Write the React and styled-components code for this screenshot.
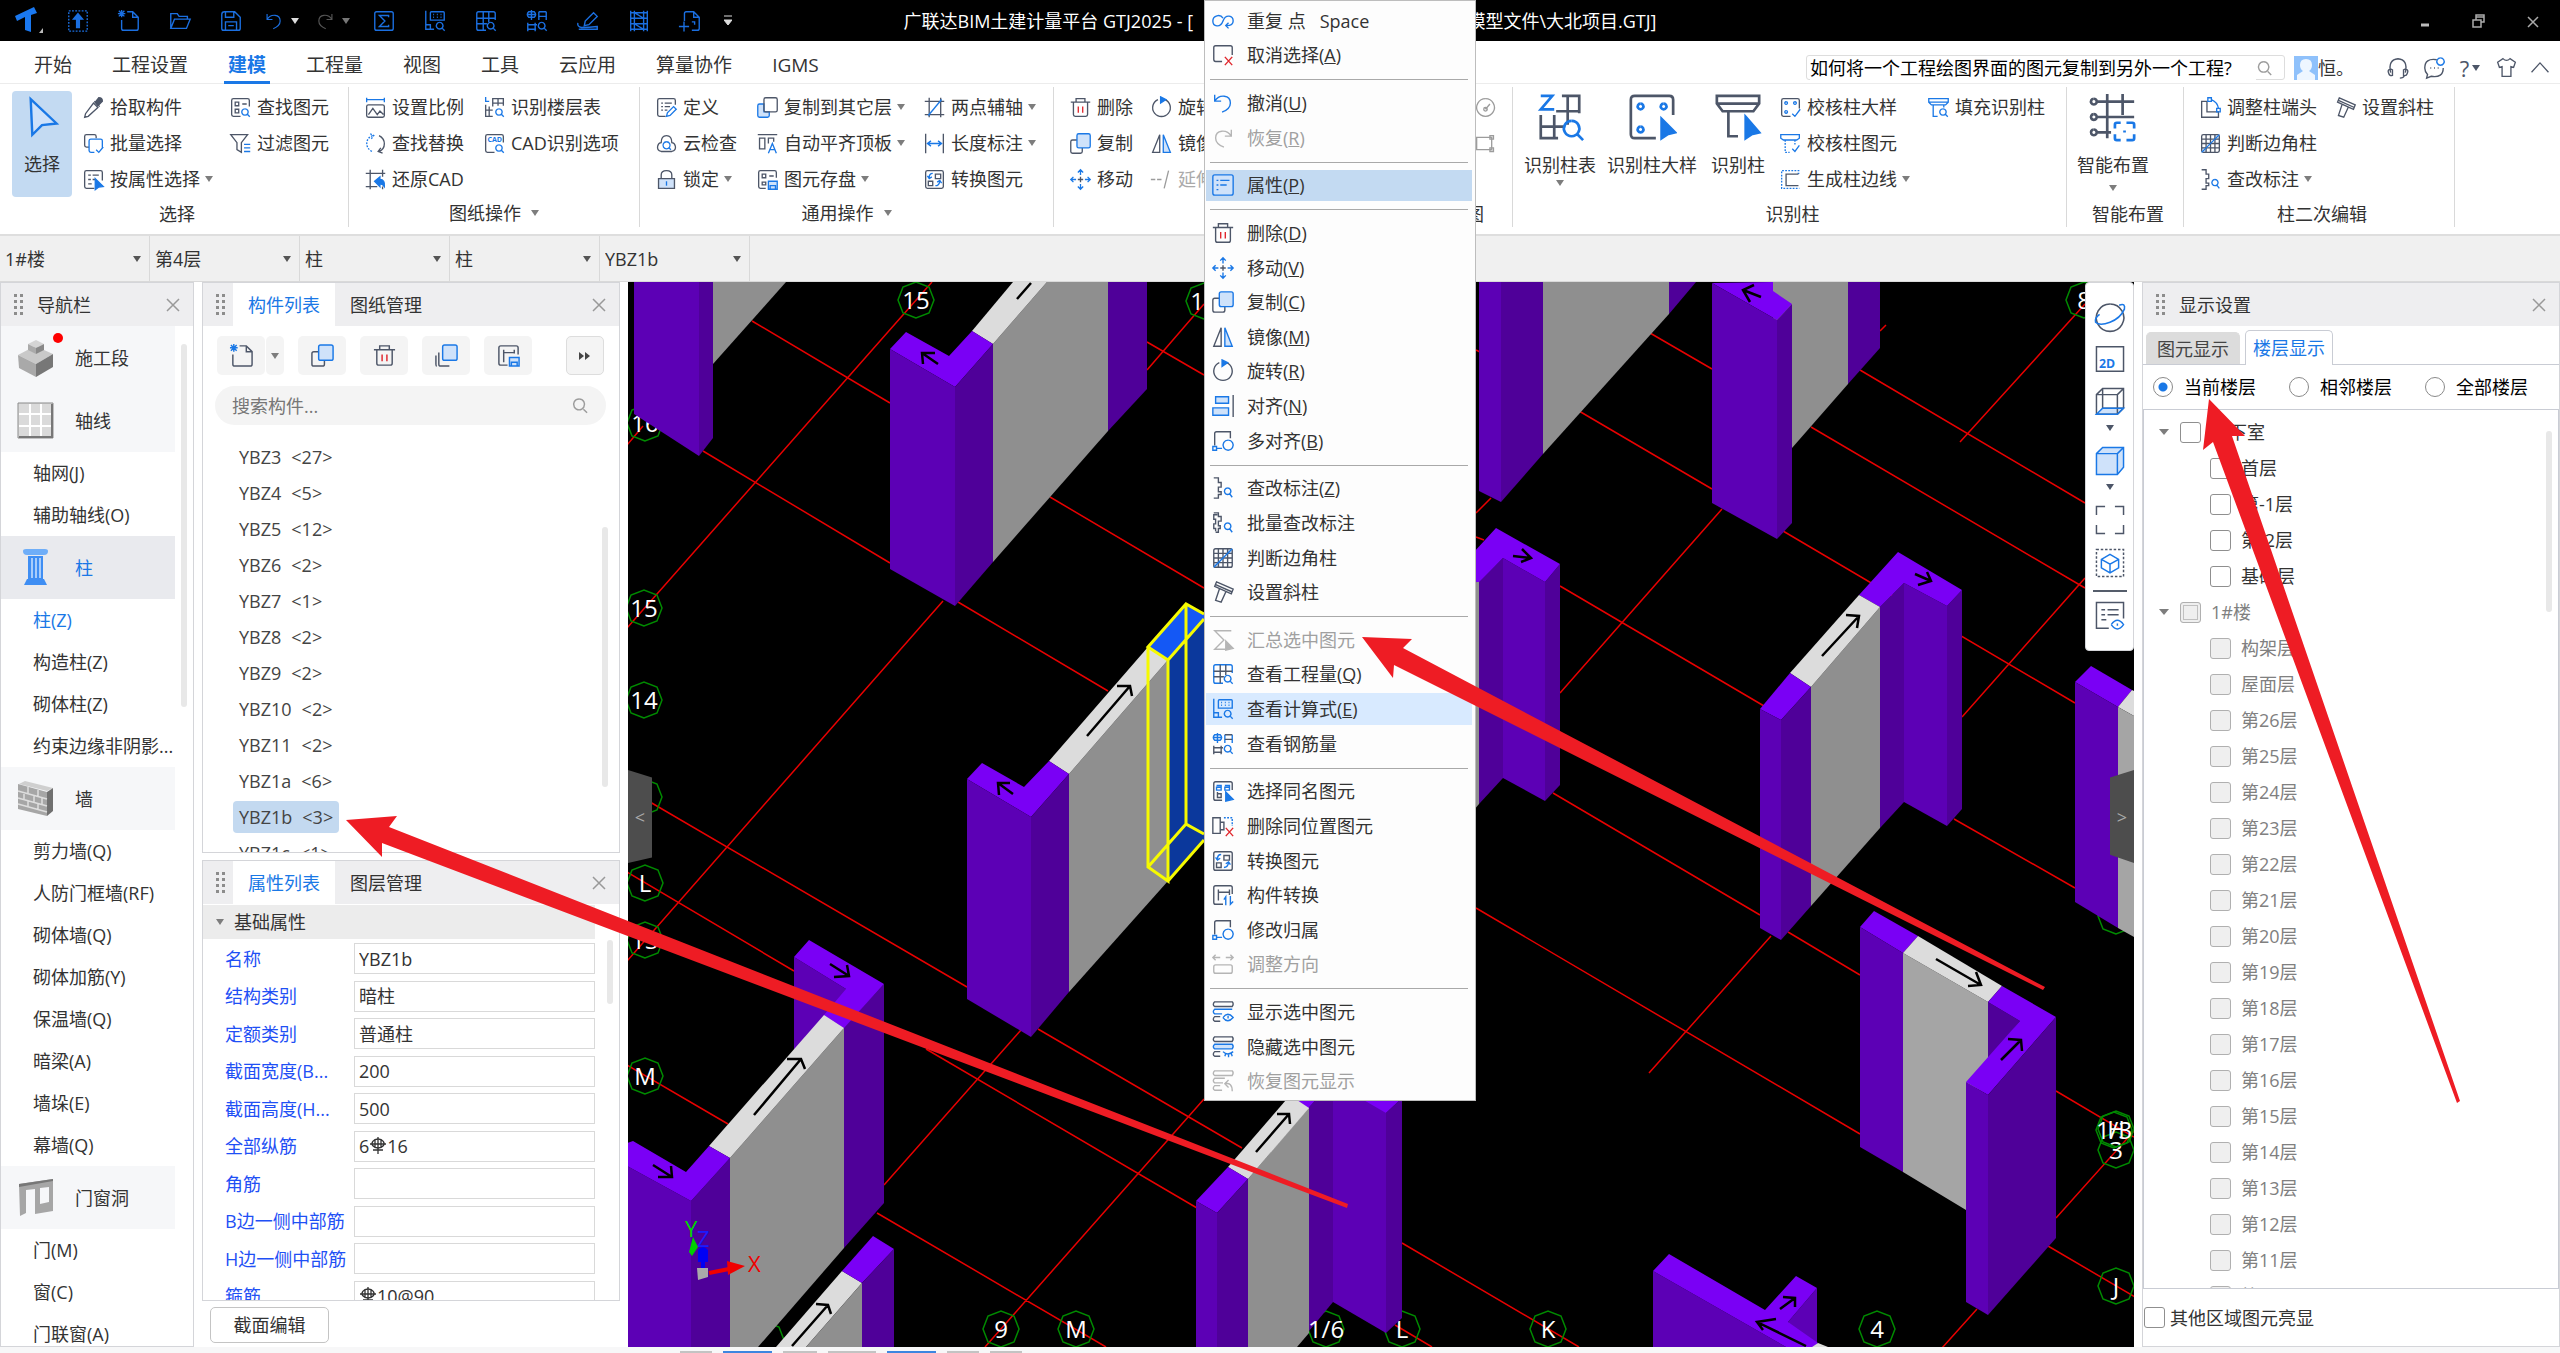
import React from "react";
import styled, { createGlobalStyle, css } from "styled-components";

const BLUE = "#1a78e6";
const DARK = "#4d5668";
const RED = "#e0262c";

/* ---------- icons ---------- */
// each entry is [kind, path]; kinds: d dark, b blue, r red strokes,
// B / D filled, l light blue fill with a blue stroke, L light blue fill only
const LENS = ["b", "M17 13.5a3.6 3.6 0 1 0 .1 0M20 20l2.5 2.5"];

const icons = {
  upload: [["b-", "M2 1h20v22H2z"], ["B", "M12 4l5 6h-3.500v9h-3v-9H7z"]],
  newFile: [["b", "M10 2h6l6 6v12a2 2 0 0 1-2 2H6a2 2 0 0 1-2-2V11M16 2v6h6"], ["b", "M1 1l6 6M7 1L1 7M4 0v8M0 4h8"]],
  open: [["b", "M2 20V4h7l2 3h9v3M2 20l4-10h17l-4 10z"]],
  save: [["b", "M2 5q0-3 3-3h11l6 6v12q0 2-2 2H4q-2 0-2-2zM6 2v6h9V2M6 22v-9h12v9M9 17h6"]],
  undo: [["b", "M3 3v7h7M3 10C8 2 20 3 20 12c0 5-4 8-9 10"]],
  redo: [["g", "M21 3v7h-7M21 10C16 2 4 3 4 12c0 5 4 8 9 10"]],
  sigma: [["b", "M2 4q0-2 2-2h16q2 0 2 2v16q0 2-2 2H4q-2 0-2-2zM17 8V6H7l6 6-6 6h10v-2"]],
  calc: [["b", "M2 1v20h9M7 3q0-1 1-1h13q1 0 1 1v8H7zM2 16h5v5M10 5h1M14 5h1M18 5h1M10 8h1M14 8h1M18 8h1"], LENS],
  gridFind: [["b", "M22 11V4q0-2-2-2H4q-2 0-2 2v16q0 2 2 2h8"], ["k", "M2 9h20M2 15h11M9 2v20M15 2v11"], LENS],
  rebarFind: [["b", "M1 5h10M3 2q-3 3 0 6h6q3-3 0-6zM6 0v11M14 11V2M22 11V2"], ["k", "M14 2h8M14 7h8M2 23v-9M10 14v9M2 16h10M2 21h9"], LENS],
  pen: [["b", "M8 17l1-5 9-9 4 4-9 9zM1 14q-1 4 4 5 8 0 17-1v3H2"]],
  film: [["b", "M3 1v22M21 1v22M7 1v22M17 1v22M3 3h18M3 9h18M3 15h18M3 21h18M7 3l10 6M7 15l10 6"]],
  addSheet: [["b", "M6 12V4q0-2 2-2h8l6 6v12q0 2-2 2h-6M16 2v6h6M0 18h11M5.500 12.500v11M14 13h3v3"]],

  cursor: [["l", "M5 1l16 15-9 1-6 6z"]],
  dropper: [["d", "M12 7l5 5L6 22l-4 1 1-4zM13 5l6 6"], ["D", "M14 6l4-5q4 0 4 4l-5 5z"]],
  batch: [["d", "M7 16H4q-2 0-2-2V4q0-2 2-2h9q2 0 2 2v2"], ["b", "M13 22H9q-2 0-2-2V9q0-2 2-2h11q2 0 2 2v8M15 19l3 3 5-6"]],
  byProp: [["d", "M13 22H4q-2 0-2-2V4q0-2 2-2h16q2 0 2 2v9M6 7h3M11 7h7M6 12h3M11 12h3M6 17h4"], ["B", "M14 11l9 9-5 .5-4 3z"]],
  findEl: [["d", "M12 22H4q-2 0-2-2V4q0-2 2-2h16q2 0 2 2v7M6 6h4v4H6zM14 8h5M6 14h4v4H6z"], LENS],
  filter: [["d", "M1 2h19l-7 9v11l-5-3v-8z"], ["b", "M16 13h7M16 17h7M16 21h7"]],
  scale: [["b", "M2 1v5M22 1v5M2 3h20"], ["d", "M2 11q0-2 2-2h16q2 0 2 2v10q0 2-2 2H4q-2 0-2-2zM4 20l5-7 5 7 3-4 4 4"]],
  swap: [["b-", "M8 21C0 17 0 6 9 3M6 1l4 2-3 4"], ["d", "M16 3c8 4 8 15 0 18M20 23l-5-2 3-4"]],
  restore: [["d", "M1 5h22M1 20h13M6 1v22M20 1v8M20 20v3"], ["B", "M11 14l6-5v3q6 0 5 8-2-3-5-3v3z"]],
  floorTable: [["b", "M2 0v5h4"], ["d", "M10 11V2h12v8M10 7h12M16 2v8M2 9v13h8M2 15h8M6 11v11"], LENS],
  cadOpt: [["d", "M12 22H4q-2 0-2-2V4q0-2 2-2h16q2 0 2 2v7"], ["t", "CAD"], LENS],
  define: [["d", "M11 22H4q-2 0-2-2V4q0-2 2-2h16q2 0 2 2v5M6 7h2M10 7h8M6 11h2M10 11h6M6 15h2M10 15h3"], ["b", "M12 22l1-4 7-7 3 3-7 7z"]],
  cloud: [["d", "M6 21q-5-1-4-6 1-4 4-4 0-8 6-8t6 8q3 0 4 4 1 5-4 6z"], ["b", "M12 10a4 4 0 1 0 .1 0M15 17l2 2"]],
  lock: [["L", "M3 11h18v11H3z"], ["d", "M6 11V7q0-5 6-5t6 5v4M3 11h18v11H3z"], ["b", "M12 14v5"]],
  copy: [["d", "M8 8H3q-2 0-2 2v11q0 2 2 2h9q2 0 2-2v-4"], ["l", "M8 3q0-2 2-2h11q2 0 2 2v12q0 2-2 2H10q-2 0-2-2z"]],
  copyFloor: [["l", "M8 8H3q-2 0-2 2v11q0 2 2 2h9q2 0 2-2v-4h-6z"], ["d", "M8 3q0-2 2-2h11q2 0 2 2v12q0 2-2 2H10q-2 0-2-2z"]],
  alignTop: [["d", "M1 2h22M3 6h6v12H3zM13 12V6h6v4"], ["b", "M13 23l4.500-11L22 23M14 19h7"]],
  store: [["d", "M10 22H4q-2 0-2-2V4q0-2 2-2h16q2 0 2 2v6M6 6h4v4H6zM14 8h5M6 15h4v3H6z"], ["l", "M13 14h10v9H13zM15 23v-4h6v4"]],
  twoPoint: [["d", "M1 5h22M1 20h22M6 1v22M19 1v22"], ["b", "M5 21L20 3"]],
  length: [["d", "M2 1v22M22 1v22"], ["b", "M4 12h16M8 9l-4 3 4 3M16 9l4 3-4 3"]],
  convert: [["d", "M2 4q0-2 2-2h16q2 0 2 2v16q0 2-2 2H4q-2 0-2-2zM13 6h6v5h-6zM5 14h5v5H5z"], ["b", "M10 5q-4 0-4 5M4 8l2 3 3-2M13 19q4 0 5-5M15 15l3-2 2 3"]],
  trash: [["d", "M1 6h22M4 6v14q0 2 2 2h12q2 0 2-2V6M7 6V2h10v4"], ["r", "M9.500 11v7M14.500 11v7"]],
  move: [["b", "M9 4l3-3 3 3M9 20l3 3 3-3M4 9l-3 3 3 3M20 9l3 3-3 3M12 2v5M12 17v5M2 12h5M17 12h5"], ["d", "M12 9v6M9 12h6"]],
  rotate: [["d", "M16 3a10 10 0 1 1-8 0"], ["B", "M11 0l6 3-6 4z"]],
  mirror: [["d", "M10 2v20H2z"], ["l", "M14 2v20h8z"]],
  extend: [["g", "M0 12h5M7 12h5M15 22l5-20"]],
  circle: [["g", "M12 2a10 10 0 1 0 .1 0M12 14l5-6M10 14a2 2 0 1 0 4 0 2 2 0 1 0-4 0"]],
  rect: [["g", "M2 5h17v14H2zM17 3h4v4h-4zM17 17h4v4h-4z"]],

  checkDetail: [["d", "M12 22H4q-2 0-2-2V4q0-2 2-2h16q2 0 2 2v9"], ["b", "M7 5.500a1.500 1.500 0 1 0 .1 0M17 5.500a1.500 1.500 0 1 0 .1 0M7 15.500a1.500 1.500 0 1 0 .1 0M14 19l3 3 6-8"]],
  checkEl: [["b-", "M6 8v14h5M17 8v5"], ["b", "M1 2h21v4l-3 2H4L1 6zM14 18l3 3 5-7"]],
  edge: [["b-", "M22 2H2v20h20M22 5h-3"], ["d", "M21 6H7v13h14"]],
  fillCol: [["b", "M1 2h22v4l-3 3H4L1 6zM1 6h22M6 9v13h5M18 9v3"], LENS],
  colEnd: [["d", "M2 5h6v12h13v6H2z"], ["b", "M9 1h4v4H9zM13 3q7 3 8 10M19 13h4v4h-4z"]],
  gridCheck: [["L", "M16 2h6v6h-6zM2 16h6v6H2z"], ["d", "M2 4q0-2 2-2h16q2 0 2 2v16q0 2-2 2H4q-2 0-2-2zM2 7h20M2 12h20M2 17h20M7 2v20M12 2v20M17 2v20"], ["b", "M22 2L2 22"]],
  annotate: [["d", "M2 1h5v5h3v5H7v5h3v3H7v4H2M7 16"], ["b", "M17 12a3.500 3.500 0 1 0 .1 0M19 18l3 4"]],
  annotateAll: [["d", "M2 1h5v4h3v5H7v5h2v3H7v4H4M6 3H2v5h2v5H2v5h2v3"], ["b", "M17 12a3.500 3.500 0 1 0 .1 0M19 18l3 4"]],
  slant: [["d", "M5 1l18 8-2 5L3 6zM4 4l18 8M8 9L4 21l6 2 5-11"]],

  repeat: [["b", "M12 9C9 4 1 6 1 12s8 8 11 0 11-6 11 0c0 4-3 5-7 5M18 14l-3 3 3 3"]],
  cancel: [["d", "M11 19H4q-2 0-2-2V4q0-2 2-2h16q2 0 2 2v8"], ["r", "M14 14l8 9M22 14l-8 9"]],
  props: [["l", "M1 3q0-2 2-2h18q2 0 2 2v18q0 2-2 2H3q-2 0-2-2z"], ["b", "M5 7h2M9 7h10M5 12h2M9 12h7M5 17h2"]],
  align: [["l", "M4 2h14v7H4zM1 14h17v8H1z"], ["d", "M23 0v24"]],
  multiAlign: [["d", "M3 17V4q0-2 2-2h15v7"], ["b", "M1 18h4v4H1zM5 20h6M17.500 11a5.500 5.500 0 1 0 .1 0"]],
  sumSel: [["g", "M21 2H3l10 10L3 22h12"], ["G", "M15 13l8 8-8 2z"]],
  sameName: [["d", "M11 22H4q-2 0-2-2V4q0-2 2-2h16q2 0 2 2v7M6 13v6h4v-4H6"], ["b", "M5 6h5v5H5V8h5M14 6h5v5h-5V8h5"], ["B", "M15 13l8 8-8 2z"]],
  delSame: [["d", "M1 3h8v17H1zM9 8h4v8H9"], ["b-", "M13 3h9v9"], ["r", "M15 14l8 9M23 14l-8 9"]],
  partSwap: [["d", "M12 22H4q-2 0-2-2V4q0-2 2-2h16q2 0 2 2v7M7 6v12M7 9h12M19 6v6M7 18"], ["b", "M15 23v-9l-2 3M20 13v9l3-3"]],
  direction: [["g", "M1 5h8M4 2L1 5l3 3M15 5h8M20 2l3 3-3 3M4 13h16q2 0 2 2v5q0 2-2 2H4q-2 0-2-2v-5q0-2 2-2z"]],
  showSel: [["d", "M22 1H3q-3 3 0 5h19q2-3 0-5zM9 17H3q-3 3 0 5h6"], ["b", "M22 9H3q-3 3 0 5h8M12 18q5-7 11 0-6 7-11 0M17.500 16v3"]],
  hideSel: [["d", "M22 1H3q-3 3 0 5h19q2-3 0-5zM9 17H3q-3 3 0 5h6"], ["l", "M22 9H3q-3 3 0 5h19q2-3 0-5z"], ["b", "M12 17q5 5 11 0M14 22l1-3M18 23v-3M22 22l-1-3"]],
  restoreSel: [["g", "M22 1H3q-3 3 0 5h19q2-3 0-5zM14 9H3q-3 3 0 5h9M9 17H3q-3 3 0 5h8M14 15q8-2 8 8M18 11l-4 4 4 4"]],

  tableBig: [["b", "M2 1h6L2 8h7"], ["d", "M13 1h9v9M10 9h12M16 1v15M2 11v12h9M2 17h12M9 11v12"], ["b", "M18 14a4 4 0 1 0 .1 0M21 21l3 3"]],
  detailBig: [["d", "M14 23H3q-2 0-2-2V3q0-2 2-2h18q2 0 2 2v8"], ["b", "M6 5a1.500 1.500 0 1 0 .1 0M18 5a1.500 1.500 0 1 0 .1 0M6 17a1.500 1.500 0 1 0 .1 0"], ["B", "M17 13l7 7-4 1-3 2z"]],
  columnBig: [["d", "M1 1h22v4l-3 4H4L1 5zM1 5h22M7 9v13h5"], ["B", "M16 12l7 8-4 1-3 2z"]],
  layoutBig: [["d", "M4 4h19M4 12h19M4 20h7M9 0v23M17 0v11M2 2.500a1.500 1.500 0 1 0 .1 0M2 10.500a1.500 1.500 0 1 0 .1 0M2 18.500a1.500 1.500 0 1 0 .1 0"], ["b", "M13 18v-2q0-1 1-1h2M19 15h3q1 0 1 1v2M13 21v2q0 1 1 1h2M19 24h3q1 0 1-1v-2M18 19v1"]],

  stack: [["d", "M4 9v12q0 2 2 2h9M1 12v9q0 2 1 2"], ["l", "M8 3q0-2 2-2h11q2 0 2 2v12q0 2-2 2H10q-2 0-2-2z"]],
  savePart: [["d", "M11 22H4q-2 0-2-2V4q0-2 2-2h16q2 0 2 2v7M7 6v13M7 9h11M18 6v4"], ["l", "M13 14h10v9H13zM15 23v-4h6v4"]],
  newPart: [["d", "M10 2h7l6 6v13q0 2-2 2H5q-2 0-2-2V11M17 2v6h6"], ["b", "M1 1l6 6M7 1L1 7M4 0v8M0 4h8"]],
  search: [["g", "M10 3a7.500 7.500 0 1 0 .1 0M16 17l5 5"]],

  orbit: [["d", "M12 2a10.500 10.500 0 1 0 .1 0"], ["b", "M19 3q5-2 4 3-3 7-11 10T1 16q-1-3 3-6"]],
  view2d: [["d", "M1 2h22v20H1z"], ["t2", "2D"]],
  wire: [["L", "M1 22l5-5h17l-4 5z"], ["d", "M1 6h17v16H1zM1 6l5-5h17v16l-5 5M18 6l5-5M6 1v16h17"], ["b", "M1 22l5-5h17l-5 5z"]],
  solid: [["l", "M1 6l5-5h17v16l-5 6H1zM1 6h17v17M18 6l5-5"]],
  fit: [["d", "M1 8V1h7M16 1h7v7M23 16v7h-7M8 23H1v-7"]],
  isolate: [["d-", "M1 1h22v22H1z"], ["b", "M12 5l7 4v7l-7 4-7-4V9zM5 9l7 4 7-4M12 13v7"]],
  listEye: [["d", "M11 22H1V1h22v13M5 7h3M10 7h9M5 11h3M10 11h9M5 15h4"], ["b", "M13 19q5-7 10 0-5 7-10 0M18 18v2"]],

  headset: [["d", "M4 17q-3-14 8-15 11 1 8 15M4 13q-4 1-2 5 1 3 4 2V14zM20 13q4 1 2 5-1 3-4 2V14zM19 20q-1 3-5 3"]],
  bubble: [["d", "M15 3Q2 1 2 12q0 4 3 7l-1 4 5-2q13 2 13-9M8 12h1M12 12h1M16 12h1"], ["b", "M19 1a4 4 0 1 0 .1 0"]],
  shirt: [["d", "M8 2q4 4 8 0l6 4-2 6-3-1v11H7V11l-3 1-2-6z"]],
  chevron: [["d", "M2 17L12 6l10 11"]],
};

const palette = { d: DARK, D: DARK, k: DARK, b: BLUE, B: BLUE, l: BLUE, L: "none", r: RED, g: "#9c9c9c", G: "#9c9c9c" };

function Icon({ name, size = 22, tone, weight = 1.500 }) {
  return (
    <svg width={size} height={size} viewBox="-1 -1 26 26" fill="none" aria-hidden="true">
      {icons[name].map(([kind, d], i) => {
        const k = kind[0];
        if (k === "t") {
          const wide = kind === "t2";
          return (
            <text key={i} x={wide ? 3 : 4} y={wide ? 19 : 10} fontSize={wide ? 10 : 8} fontWeight="700" fill={BLUE}>
              {d}
            </text>
          );
        }
        const color = tone || palette[k];
        let fill = "none";
        if (k === "B" || k === "D" || k === "G") fill = color;
        if (k === "l" || k === "L") fill = "#cfe2fa";
        return (
          <path
            key={i}
            d={d}
            stroke={k === "L" ? "none" : color}
            strokeWidth={weight}
            strokeDasharray={kind[1] === "-" ? "2 1.500" : undefined}
            fill={fill}
          />
        );
      })}
    </svg>
  );
}

/* ---------- base ---------- */
const GlobalStyle = createGlobalStyle`
  * {
    box-sizing: border-box;
  }
  body {
    margin: 0;
    overflow: hidden;
  }
  body, button, input, select {
    font-family: "Open Sans", "Noto Sans CJK SC", sans-serif;
    font-size: 18px;
    line-height: 24px;
    color: #333;
  }
  button {
    border: 0;
    padding: 0;
    background: none;
    white-space: nowrap;
  }
  svg {
    flex: none;
  }
`;

const Page = styled.div`
  position: relative;
  display: flex;
  flex-direction: column;
  height: 100vh;
  background: #fff;
  overflow: hidden;
`;

const Caret = styled.span`
  flex: none;
  border: 4px solid transparent;
  border-top: 6px solid ${(p) => p.$color || "#7d7d7d"};
  border-bottom: 0;
`;

/* ---------- title bar ---------- */
const TitleBar = styled.header`
  flex: none;
  display: grid;
  grid-template-columns: 1fr 753px 1fr;
  align-items: center;
  height: 41px;
  background: #000;
  color: #fff;
`;
const QuickTools = styled.div`
  display: flex;
  align-items: center;
  padding-left: 8px;
`;
const QuickButton = styled.button`
  display: flex;
  align-items: center;
  justify-content: center;
  gap: 7px;
  width: ${(p) => p.$w || 51}px;
`;
const Title = styled.div`
  display: flex;
  justify-content: space-between;
  white-space: nowrap;
`;
const WindowButtons = styled.div`
  display: flex;
  justify-content: flex-end;
  button {
    width: 54px;
    line-height: 20px;
  }
`;

function TopBar() {
  return (
    <TitleBar>
      <QuickTools>
        <QuickButton $w={44} aria-label="主菜单">
          <svg width="30" height="28" viewBox="0 0 30 28">
            <path d="M0 9L19 0l3 6-6 2v17l-6-2V10L2 14z" fill="#1a78f0" />
            <path d="M28 21v5h-4z" fill="#bbb" />
          </svg>
        </QuickButton>
        {["upload", "newFile", "open", "save"].map((n) => (
          <QuickButton key={n} aria-label={n}><Icon name={n} size={24} tone="#1b6fe0" /></QuickButton>
        ))}
        <QuickButton aria-label="undo"><Icon name="undo" size={20} tone="#1b6fe0" /><Caret $color="#ddd" /></QuickButton>
        <QuickButton aria-label="redo"><Icon name="redo" size={20} tone="#555" /><Caret $color="#777" /></QuickButton>
        {["sigma", "calc", "gridFind", "rebarFind", "pen", "film", "addSheet"].map((n) => (
          <QuickButton key={n} aria-label={n}><Icon name={n} size={24} tone="#1b6fe0" /></QuickButton>
        ))}
        <QuickButton $w={26} aria-label="more">
          <svg width="8" height="12"><path d="M0 1h8M0 5h8l-4 5z" stroke="#ddd" fill="#ddd" /></svg>
        </QuickButton>
      </QuickTools>
      <Title>
        <span>广联达BIM土建计量平台 GTJ2025 - [</span>
        <span>模型文件\大北项目.GTJ]</span>
      </Title>
      <WindowButtons>
        <button aria-label="最小化">
          <svg width="12" height="12"><path d="M2 9h8" stroke="#bbb" strokeWidth="3" /></svg>
        </button>
        <button aria-label="还原">
          <svg width="14" height="14" fill="none" stroke="#aaa" strokeWidth="1.500"><path d="M1 6h8v7H1zM4 6V1h8v7H9M4 3h8" /></svg>
        </button>
        <button aria-label="关闭">
          <svg width="12" height="12" stroke="#aaa" strokeWidth="1.500"><path d="M1 1l10 10M11 1L1 11" /></svg>
        </button>
      </WindowButtons>
    </TitleBar>
  );
}

/* ---------- menu row ---------- */
const MenuRow = styled.nav`
  flex: none;
  display: flex;
  justify-content: space-between;
  height: 43px;
  padding: 0 4px 0 30px;
  border-bottom: 1px solid #ececec;
`;
const MenuTabs = styled.div`
  display: flex;
  gap: 32px;
`;
const MenuTab = styled.button`
  height: 43px;
  padding: 8px 4px 0;
  font-size: 19px;
  border-bottom: 3px solid ${(p) => (p.$active ? BLUE : "transparent")};
  color: ${(p) => (p.$active ? BLUE : "#333")};
  font-weight: ${(p) => (p.$active ? 700 : 400)};
`;
const MenuRight = styled.div`
  display: flex;
  align-items: center;
  padding-top: 11px;
`;
const HelpSearch = styled.label`
  display: flex;
  align-items: center;
  width: 479px;
  height: 25px;
  margin-right: 9px;
  padding: 0 10px 0 3px;
  border: 1px solid #ddd;
  border-radius: 3px;
  input {
    flex: 1;
    min-width: 0;
    padding: 0;
    border: 0;
    color: #000;
  }
`;
const User = styled.div`
  display: flex;
  align-items: center;
  width: 86px;
`;
const SmallIcons = styled.div`
  display: flex;
  align-items: center;
  button {
    display: flex;
    align-items: center;
    justify-content: center;
    gap: 3px;
    width: 36px;
    font-size: 22px;
    color: ${DARK};
  }
  button:last-child {
    width: 32px;
  }
`;

const tabs = ["开始", "工程设置", "建模", "工程量", "视图", "工具", "云应用", "算量协作", "IGMS"];

function Menu() {
  return (
    <MenuRow>
      <MenuTabs>
        {tabs.map((t) => (
          <MenuTab key={t} $active={t === "建模"}>{t}</MenuTab>
        ))}
      </MenuTabs>
      <MenuRight>
        <HelpSearch>
          <input aria-label="帮助搜索" defaultValue="如何将一个工程绘图界面的图元复制到另外一个工程?" />
          <Icon name="search" size={18} weight={2} />
        </HelpSearch>
        <User>
          <svg width="24" height="24">
            <path d="M0 0h24v24H0z" fill="#8fc1fb" />
            <path d="M12 3q6 0 6 6 0 4-3 6l6 4v5H3v-5l6-4q-3-2-3-6 0-6 6-6z" fill="#eef6ff" />
          </svg>
          恒。
        </User>
        <SmallIcons>
          <button aria-label="客服"><Icon name="headset" size={24} /></button>
          <button aria-label="消息"><Icon name="bubble" size={24} /></button>
          <button aria-label="帮助">?<Caret $color={DARK} /></button>
          <button aria-label="皮肤"><Icon name="shirt" size={23} /></button>
          <button aria-label="收起"><Icon name="chevron" size={22} /></button>
        </SmallIcons>
      </MenuRight>
    </MenuRow>
  );
}

/* ---------- ribbon ---------- */
const RibbonBar = styled.section`
  flex: none;
  display: flex;
  height: 152px;
  padding: 3px 0 7px;
  border-bottom: 2px solid #dedede;
`;
const Group = styled.div`
  flex: none;
  display: flex;
  flex-direction: column;
  width: ${(p) => p.$w}px;
  padding-left: ${(p) => p.$pad || 15}px;
  border-right: 1px solid #d9d9d9;
`;
const GroupBody = styled.div`
  display: flex;
  height: 114px;
`;
const GroupLabel = styled.div`
  display: flex;
  align-items: center;
  justify-content: center;
  gap: 10px;
  margin-left: -${(p) => p.$pad || 15}px;
  padding: ${(p) => (p.$more ? "0" : "3px 0 0 6px")};
  line-height: 28px;
`;
const Column = styled.div`
  flex: none;
  display: grid;
  grid-template-rows: repeat(3, 36px);
  width: ${(p) => p.$w}px;
  padding-top: 2px;
`;
const Tool = styled.button`
  display: flex;
  align-items: center;
  gap: 5px;
  color: ${(p) => (p.disabled ? "#aaa" : "#333")};
`;
const BigTool = styled.button`
  flex: none;
  display: flex;
  flex-direction: column;
  align-items: center;
  width: ${(p) => p.$w}px;
  height: 106px;
  margin: 4px ${(p) => p.$gap || 0}px 0 0;
  padding-top: ${(p) => (p.$active ? 5 : 1)}px;
  border-radius: 4px;
  ${(p) => p.$active && css`
    background: #c3daf2;
  `}
  svg {
    margin-bottom: ${(p) => (p.$active ? 14 : 11)}px;
  }
  ${Caret} {
    margin-top: ${(p) => p.$drop || 0}px;
  }
`;

// a trailing "v" marks a drop-down, an "x" a disabled tool
const ribbon = [
  {
    w: 349, pad: 12, label: "选择",
    big: [["cursor", "选择", 60, 10, true]],
    cols: [
      [147, ["dropper", "拾取构件"], ["batch", "批量选择"], ["byProp", "按属性选择", "v"]],
      [110, ["findEl", "查找图元"], ["filter", "过滤图元"]],
    ],
  },
  {
    w: 291, label: "图纸操作", more: true,
    cols: [
      [119, ["scale", "设置比例"], ["swap", "查找替换"], ["restore", "还原CAD"]],
      [150, ["floorTable", "识别楼层表"], ["cadOpt", "CAD识别选项"]],
    ],
  },
  {
    w: 414, label: "通用操作", more: true,
    cols: [
      [101, ["define", "定义"], ["cloud", "云检查"], ["lock", "锁定", "v"]],
      [167, ["copyFloor", "复制到其它层", "v"], ["alignTop", "自动平齐顶板", "v"], ["store", "图元存盘", "v"]],
      [120, ["twoPoint", "两点辅轴", "v"], ["length", "长度标注", "v"], ["convert", "转换图元"]],
    ],
  },
  {
    w: 360, label: "修改",
    cols: [
      [81, ["trash", "删除"], ["copy", "复制"], ["move", "移动"]],
      [81, ["rotate", "旋转"], ["mirror", "镜像"], ["extend", "延伸", "x"]],
    ],
  },
  {
    w: 99, pad: 60, label: "绘图",
    cols: [[30, ["circle", "", "x"], ["rect", "", "x"]]],
  },
  {
    w: 554, pad: 4, label: "识别柱",
    big: [["tableBig", "识别柱表", 86, 4, false, 3], ["detailBig", "识别柱大样", 90, 0], ["columnBig", "识别柱", 82, 0]],
    cols: [
      [148, ["checkDetail", "校核柱大样"], ["checkEl", "校核柱图元"], ["edge", "生成柱边线", "v"]],
      [120, ["fillCol", "填充识别柱"]],
    ],
  },
  { w: 117, pad: 4, label: "智能布置", big: [["layoutBig", "智能布置", 84, 0, false, 8]], cols: [] },
  {
    w: 271, label: "柱二次编辑",
    cols: [
      [135, ["colEnd", "调整柱端头"], ["gridCheck", "判断边角柱"], ["annotate", "查改标注", "v"]],
      [100, ["slant", "设置斜柱"]],
    ],
  },
];

function Ribbon() {
  return (
    <RibbonBar>
      {ribbon.map((g) => (
        <Group key={g.label} $w={g.w} $pad={g.pad}>
          <GroupBody>
            {(g.big || []).map(([icon, text, w, gap, active, drop]) => (
              <BigTool key={text} $w={w} $gap={gap} $active={active} $drop={drop}>
                <Icon name={icon} size={active ? 42 : 50} weight={active ? 1.500 : 1.400} />
                {text}
                {drop && <Caret />}
              </BigTool>
            ))}
            {g.cols.map(([w, ...tools], i) => (
              <Column key={i} $w={w}>
                {tools.map(([icon, text, flag]) => (
                  <Tool key={icon} disabled={flag === "x"} aria-label={text || icon}>
                    <Icon name={icon} size={23} />
                    {text}
                    {flag === "v" && <Caret />}
                  </Tool>
                ))}
              </Column>
            ))}
          </GroupBody>
          <GroupLabel $pad={g.pad} $more={g.more}>
            {g.label}
            {g.more && <Caret />}
          </GroupLabel>
        </Group>
      ))}
    </RibbonBar>
  );
}

/* ---------- selector row ---------- */
const SelectorRow = styled.div`
  flex: none;
  display: flex;
  height: 46px;
  background: #f0f0f0;
  border-bottom: 1px solid #d9d9d9;
`;
const Selector = styled.div`
  display: grid;
  align-items: center;
  width: 150px;
  border-right: 1px solid #d9d9d9;
  select, ${Caret} {
    grid-area: 1 / 1;
  }
  select {
    height: 100%;
    padding: 0 5px;
    border: 0;
    appearance: none;
    background: none;
  }
  ${Caret} {
    justify-self: end;
    margin-right: 8px;
    pointer-events: none;
  }
`;

const selectors = [["楼号", "1#楼"], ["楼层", "第4层"], ["构件类型", "柱"], ["构件", "柱"], ["名称", "YBZ1b"]];

/* ---------- docked panels ---------- */
const Main = styled.main`
  flex: 1;
  min-height: 0;
  display: flex;
  gap: 8px;
`;
const Panel = styled.section`
  display: flex;
  flex-direction: column;
  min-height: 0;
  border: 1px solid #d4d5d9;
  background: #fff;
  overflow: hidden;
`;
const PanelHead = styled.div`
  flex: none;
  display: flex;
  align-items: center;
  height: 43px;
  padding: 0 13px;
  background: #eeeef0;
`;
const PanelTitle = styled.h2`
  flex: 1;
  margin: 0 0 0 13px;
  font-size: 18px;
  font-weight: 400;
`;
const PanelTab = styled.button`
  height: 43px;
  padding: 0 15px;
  background: ${(p) => (p.$active ? "#fff" : "none")};
  color: ${(p) => (p.$active ? BLUE : "#333")};
`;
const Tabs = styled.div`
  flex: 1;
  display: flex;
  padding-left: 7px;
`;
const Scroll = styled.div`
  flex: none;
  width: 6px;
  height: ${(p) => p.$h}px;
  margin: ${(p) => p.$top}px ${(p) => p.$right || 0}px 0 auto;
  border-radius: 3px;
  background: #e8e8e8;
`;

const Grip = () => (
  <svg width="10" height="24" fill="#8c8c8c" aria-hidden="true">
    {[1, 7, 13, 19].map((y) => (
      <path key={y} d={`M0 ${y}h3v3H0zM6 ${y}h3v3H6z`} />
    ))}
  </svg>
);
const Close = () => (
  <button aria-label="关闭">
    <svg width="14" height="14" stroke="#999" strokeWidth="1.500"><path d="M1 1l12 12M13 1L1 13" /></svg>
  </button>
);

/* navigation */
const NavPanel = styled(Panel)`
  flex: none;
  width: 194px;
`;
const NavBody = styled.div`
  display: flex;
  min-height: 0;
`;
const NavList = styled.div`
  width: 174px;
`;
const NavGroup = styled.button`
  display: flex;
  align-items: center;
  gap: 21px;
  width: 100%;
  height: 63px;
  padding-left: 17px;
  background: ${(p) => (p.$active ? "#e9eaee" : "#f6f7f9")};
  color: ${(p) => (p.$active ? BLUE : "#333")};
`;
const NavItem = styled.button`
  display: block;
  width: 100%;
  height: 42px;
  padding: 0 0 0 32px;
  text-align: left;
  color: ${(p) => (p.$active ? BLUE : "#333")};
`;

const navArt = {
  施工段: (
    <>
      <path d="M0 17l17-9 18 8-17 10z" fill="#c9c9c9" />
      <path d="M0 17l18 9v13L1 30z" fill="#a9a9a9" />
      <path d="M18 26l17-10v13L18 39z" fill="#777" />
      <path d="M10 6l8-4 8 4-8 4z" fill="#d5d5d5" /><path d="M10 6l8 4v6l-8-4z" fill="#aaa" /><path d="M18 10l8-4v6l-8 4z" fill="#888" />
      <circle cx="40" cy="0" r="5" fill="#fe0000" />
    </>
  ),
  轴线: (
    <>
      <path d="M0 2h35v35H0z" fill="#dadada" stroke="#8b8b8b" />
      <path d="M1 13h32M1 25h32M12 3v33M23 3v33" stroke="#fff" strokeWidth="2" />
      <path d="M34 3v33H1" stroke="#777" strokeWidth="2" fill="none" />
    </>
  ),
  柱: (
    <>
      <path d="M5 3q0-2 3-2h19q3 0 3 2 0 4-4 4H9Q5 7 5 3z" fill="#6faef8" />
      <path d="M10 8h15v23H10z" fill="#3f8ef3" />
      <path d="M14 10v20M18 10v20M22 10v20" stroke="#a8cdfb" strokeWidth="2" />
      <path d="M9 31h17l3 6H6z" fill="#3f8ef3" />
    </>
  ),
  墙: (
    <>
      <path d="M1 5l6-3 28 7-6 3z" fill="#cfcfcf" />
      <path d="M0 5l29 8v24L0 30z" fill="#a6a6a6" />
      <path d="M29 13l6-4v23l-6 5z" fill="#707070" />
      <path d="M0 12l29 8M0 19l29 8M0 25l29 8M10 8v6M20 11v6M6 15v6M16 17v6M24 19v6M10 22v6M20 25v6" stroke="#dedede" strokeWidth="1.500" />
    </>
  ),
  门窗洞: (
    <>
      <path d="M1 6l34-5v32l-18 3V11l-9 1v23l-6 3z" fill="#a6a6a6" />
      <path d="M22 10l9-1v15l-9 2z" fill="#f6f7f9" />
      <path d="M1 6l34-5v2L1 9z" fill="#777" />
    </>
  ),
};

const nav = [
  ["施工段"],
  ["轴线", "轴网(J)", "辅助轴线(O)"],
  ["柱", "柱(Z)", "构造柱(Z)", "砌体柱(Z)", "约束边缘非阴影..."],
  ["墙", "剪力墙(Q)", "人防门框墙(RF)", "砌体墙(Q)", "砌体加筋(Y)", "保温墙(Q)", "暗梁(A)", "墙垛(E)", "幕墙(Q)"],
  ["门窗洞", "门(M)", "窗(C)", "门联窗(A)"],
];

function Navigation() {
  return (
    <NavPanel>
      <PanelHead><Grip /><PanelTitle>导航栏</PanelTitle><Close /></PanelHead>
      <NavBody>
        <NavList>
          {nav.map(([group, ...items]) => (
            <React.Fragment key={group}>
              <NavGroup $active={group === "柱"}>
                <svg width="36" height="40" overflow="visible">{navArt[group]}</svg>
                {group}
              </NavGroup>
              {items.map((t) => (
                <NavItem key={t} $active={t === "柱(Z)"}>{t}</NavItem>
              ))}
            </React.Fragment>
          ))}
        </NavList>
        <Scroll $h={363} $top={18} $right={6} />
      </NavBody>
    </NavPanel>
  );
}

/* component list */
const LeftDock = styled.div`
  flex: none;
  display: flex;
  flex-direction: column;
  width: 418px;
`;
const ListPanel = styled(Panel)`
  flex: none;
  height: 571px;
`;
const ListTools = styled.div`
  flex: none;
  display: flex;
  gap: 14px;
  padding: 10px 15px 0 14px;
`;
const ListTool = styled.button`
  display: flex;
  align-items: center;
  justify-content: center;
  width: 48px;
  height: 39px;
  border-radius: 5px;
  background: #f4f4f4;
  &:last-child {
    width: 38px;
    margin-left: auto;
    border: 1px solid #ddd;
  }
`;
const SplitTool = styled.div`
  display: flex;
  gap: 1px;
  button:last-child {
    width: 18px;
    margin: 0;
    border: 0;
  }
`;
const ListSearch = styled.label`
  flex: none;
  display: flex;
  align-items: center;
  height: 39px;
  margin: 11px 13px 14px 12px;
  padding: 0 16px 0 17px;
  border-radius: 20px;
  background: #f4f4f4;
  input {
    flex: 1;
    padding: 0;
    border: 0;
    background: none;
  }
  input::placeholder {
    color: #777;
  }
`;
const ListBody = styled.div`
  display: flex;
  min-height: 0;
  padding-left: 30px;
`;
const Parts = styled.ul`
  margin: 0;
  padding: 0;
  list-style: none;
`;
const Part = styled.li`
  display: flex;
  align-items: center;
  height: 36px;
  button {
    display: flex;
    gap: 10px;
    padding: 4px 6px;
    border-radius: 4px;
    color: #444;
    background: ${(p) => (p.$active ? "#c3d9f0" : "none")};
  }
`;

const parts = [
  ["YBZ3", 27], ["YBZ4", 5], ["YBZ5", 12], ["YBZ6", 2], ["YBZ7", 1], ["YBZ8", 2],
  ["YBZ9", 2], ["YBZ10", 2], ["YBZ11", 2], ["YBZ1a", 6], ["YBZ1b", 3], ["YBZ1c", 1],
];

function PartList() {
  return (
    <ListPanel>
      <PanelHead>
        <Grip />
        <Tabs><PanelTab $active>构件列表</PanelTab><PanelTab>图纸管理</PanelTab></Tabs>
        <Close />
      </PanelHead>
      <ListTools>
        <SplitTool>
          <ListTool aria-label="新建"><Icon name="newPart" size={25} /></ListTool>
          <ListTool aria-label="新建选项"><Caret /></ListTool>
        </SplitTool>
        <ListTool aria-label="复制"><Icon name="copy" size={25} /></ListTool>
        <ListTool aria-label="删除"><Icon name="trash" size={25} /></ListTool>
        <ListTool aria-label="层间复制"><Icon name="stack" size={25} /></ListTool>
        <ListTool aria-label="存档"><Icon name="savePart" size={25} /></ListTool>
        <ListTool aria-label="更多">
          <svg width="12" height="8" fill="#444"><path d="M0 0l5 4-5 4zM6 0l5 4-5 4z" /></svg>
        </ListTool>
      </ListTools>
      <ListSearch>
        <input aria-label="搜索构件" placeholder="搜索构件..." />
        <Icon name="search" size={19} weight={2} />
      </ListSearch>
      <ListBody>
        <Parts>
          {parts.map(([name, n]) => (
            <Part key={name} $active={name === "YBZ1b"}>
              <button><span>{name}</span><span>&lt;{n}&gt;</span></button>
            </Part>
          ))}
        </Parts>
        <Scroll $h={260} $top={88} $right={11} />
      </ListBody>
    </ListPanel>
  );
}

/* properties */
const PropPanel = styled(Panel)`
  flex: 1;
  margin-top: 7px;
`;
const PropHead = styled.div`
  flex: none;
  display: flex;
  align-items: center;
  gap: 10px;
  height: 34px;
  margin: 1px 24px 1px 0;
  padding-left: 13px;
  background: #ececec;
`;
const PropBody = styled.div`
  display: flex;
  min-height: 0;
`;
const PropGrid = styled.div`
  flex: 1;
  min-width: 0;
  display: grid;
  grid-auto-rows: 1fr;
  height: 375px;
  margin-right: 12px;
  padding-left: 22px;
`;
const PropRow = styled.div`
  display: grid;
  grid-template-columns: 129px minmax(0, 1fr);
  align-items: center;
  label {
    color: #1f50f5;
    white-space: nowrap;
  }
`;
const Field = styled.div`
  display: flex;
  align-items: center;
  height: 31px;
  padding: 0 4px;
  border: 1px solid #d9d9d9;
  input {
    flex: 1;
    min-width: 0;
    padding: 0;
    border: 0;
  }
`;
const EditRow = styled.div`
  flex: none;
  padding: 6px 8px 4px;
  button {
    width: 119px;
    height: 36px;
    border: 1px solid #c4c4c4;
    border-radius: 5px;
  }
`;

const props = [
  ["名称", "YBZ1b"], ["结构类别", "暗柱"], ["定额类别", "普通柱"], ["截面宽度(B...", "200"], ["截面高度(H...", "500"],
  ["全部纵筋", "16", "6"], ["角筋", ""], ["B边一侧中部筋", ""], ["H边一侧中部筋", ""], ["箍筋", "10@90", ""],
];

// HRB400 rebar grade mark
const RebarMark = () => (
  <svg width="18" height="18" viewBox="0 0 18 18" fill="none" stroke="#333" strokeWidth="1.300">
    <path d="M9 0v17M4 13h10M1 7h16" />
    <path d="M9 2a6 4.500 0 1 0 .1 0M6 3v7M12 3v7" />
  </svg>
);

function Properties() {
  return (
    <PropPanel>
      <PanelHead>
        <Grip />
        <Tabs><PanelTab $active>属性列表</PanelTab><PanelTab>图层管理</PanelTab></Tabs>
        <Close />
      </PanelHead>
      <PropHead><Caret />基础属性</PropHead>
      <PropBody>
        <PropGrid>
          {props.map(([label, value, prefix], i) => (
            <PropRow key={label}>
              <label htmlFor={`prop-${i}`}>{label}</label>
              <Field>
                {prefix}
                {prefix !== undefined && <RebarMark />}
                <input id={`prop-${i}`} defaultValue={value} />
              </Field>
            </PropRow>
          ))}
        </PropGrid>
        <Scroll $h={64} $right={6} $top={0} />
      </PropBody>
    </PropPanel>
  );
}

/* ---------- 3D view ---------- */
const View = styled.div`
  position: relative;
  flex: 1;
  min-width: 0;
  background: #000;
  > svg {
    display: block;
    width: 100%;
    height: 100%;
  }
`;

const TOP = "#7a00f5";
const SIDE = "#5c00b5";
const SHADE = "#4f0099";
const WALL = "#8f8f8f";
const WALL2 = "#a5a5a5";
const CAP = "#dcdcdc";

const gridLines =
  "M752 321L890 403M932 282L627 628M703 451L890 563M627 445L643 426M943 601L627 961M958 602L1108 691M1147 342L1204 375" +
  "M1204 304L1147 370M1050 497L1204 588M650 802L967 987M627 872L794 971M926 1049L1197 1208M884 1185L1021 1030" +
  "M1038 1029L1242 1148M627 1065L728 1124M877 1213L1106 1347M1204 1099L985 1347M1402 1243L1579 1347M1395 1325L1432 1347" +
  "M1650 333L1712 369M1579 411L1712 489M1880 331L1886 325M1860 370L2085 503M1811 427L2085 588M2085 304L1960 442" +
  "M1476 350L1480 352M1476 513L1491 498M1476 537L1484 540M1722 509L1560 693M1783 531L2075 703M1560 586L1764 706" +
  "M2085 578L1962 717M1954 819L2075 888M1553 793L1760 915M1476 908L1860 1134M1788 932L1860 975M1771 936L1649 1073" +
  "M2056 1091L2134 1137M2056 1218L2134 1131M2048 1246L2135 1297M1942 1348L1977 1309";

const solids = [
  [SIDE, "634,282 699,282 699,456 634,414"],
  [SHADE, "699,282 713,282 713,438 699,456"],
  [WALL, "713,282 786,282 713,364"],

  [WALL, "993,344 1047,282 1108,282 1108,431 993,562"],
  [SHADE, "1108,282 1147,282 1147,389 1108,431"],
  [CAP, "972,331 1013,282 1047,282 993,344"],
  [TOP, "890,349 906,332 949,356 972,331 993,344 955,387"],
  [SIDE, "890,349 955,387 955,606 890,569"],
  [SHADE, "955,387 993,344 993,562 955,606"],

  [WALL, "1069,774 1168,660 1168,881 1069,992"],
  [CAP, "1049,761 1148,647 1168,660 1069,774"],
  [TOP, "967,779 982,763 1024,787 1049,761 1069,774 1031,817"],
  [SIDE, "967,779 1031,817 1031,1037 967,999"],
  [SHADE, "1031,817 1069,774 1069,992 1031,1037"],

  [SIDE, "794,957 846,989 846,1027 794,1060"],
  [SHADE, "884,984 884,1203 844,1248 844,1027"],
  [TOP, "794,957 809,940 884,984 844,1028 824,1015 846,989"],
  [WALL, "730,1158 844,1028 844,1248 758,1347 730,1347"],
  [CAP, "709,1146 824,1015 844,1028 730,1158"],
  [SIDE, "627,1166 691,1201 691,1347 627,1347"],
  [SHADE, "691,1201 730,1158 730,1347 691,1347"],
  [TOP, "627,1143 633,1141 686,1172 709,1146 730,1158 691,1201 627,1166"],

  [CAP, "842,1271 862,1283 806,1347 776,1347"],
  [WALL, "862,1283 862,1347 806,1347"],
  [TOP, "873,1236 894,1249 862,1283 842,1271"],
  [SHADE, "862,1283 894,1249 894,1347 862,1347"],

  [WALL, "1248,1179 1309,1107 1309,1333 1297,1347 1248,1347"],
  [CAP, "1228,1167 1286,1100 1309,1090 1309,1108 1248,1179"],
  [TOP, "1297,1100 1320,1095 1309,1108"],
  [TOP, "1196,1201 1228,1167 1248,1179 1217,1213"],
  [SIDE, "1196,1201 1217,1213 1217,1347 1196,1347"],
  [SHADE, "1217,1213 1248,1179 1248,1347 1217,1347"],
  [SHADE, "1309,1107 1320,1095 1333,1095 1333,1302 1309,1331"],
  [SIDE, "1333,1095 1386,1095 1386,1333 1333,1302"],
  [SHADE, "1386,1113 1402,1098 1402,1318 1386,1333"],
  [TOP, "1355,1095 1402,1095 1402,1098 1386,1113"],

  [SIDE, "1479,282 1501,282 1501,502 1479,491"],
  [SHADE, "1501,282 1543,282 1543,454 1501,502"],
  [WALL, "1543,282 1669,282 1669,314 1543,454"],
  [SHADE, "1669,282 1696,282 1669,314"],

  [WALL, "1773,282 1848,282 1848,384 1792,448 1773,448"],
  [SHADE, "1848,282 1880,282 1880,348 1848,384"],
  [TOP, "1712,283 1773,282 1773,291 1792,304 1777,320"],
  [SIDE, "1712,283 1777,320 1777,539 1712,503"],
  [SHADE, "1777,320 1792,304 1792,523 1777,539"],

  [WALL, "1474,583 1479,581 1479,804 1474,810"],
  [SHADE, "1479,581 1503,558 1503,778 1479,804"],
  [SIDE, "1503,558 1545,582 1545,801 1503,778"],
  [SHADE, "1545,582 1560,564 1560,785 1545,801"],
  [TOP, "1474,552 1496,528 1560,564 1545,582 1503,558 1479,582 1474,582"],

  [SHADE, "1880,607 1904,583 1904,802 1880,828"],
  [SIDE, "1904,583 1947,606 1947,826 1904,802"],
  [SHADE, "1947,606 1962,590 1962,809 1947,826"],
  [TOP, "1859,595 1898,552 1962,590 1947,606 1904,583 1880,607"],
  [WALL, "1811,687 1880,607 1880,828 1811,906"],
  [CAP, "1790,673 1859,595 1880,607 1811,687"],
  [TOP, "1760,709 1790,673 1811,687 1781,720"],
  [SIDE, "1760,709 1781,720 1781,940 1760,928"],
  [SHADE, "1781,720 1811,687 1811,906 1781,940"],

  [TOP, "2075,682 2091,666 2132,690 2118,707"],
  [SIDE, "2075,682 2118,707 2118,928 2075,902"],
  [CAP, "2118,707 2132,690 2136,692 2136,717"],
  [WALL2, "2118,707 2136,717 2136,938 2118,928"],

  [TOP, "1860,927 1874,911 1918,936 1903,953"],
  [SIDE, "1860,927 1903,953 1903,1172 1860,1147"],
  [WALL2, "1903,953 1988,1002 1988,1094 1966,1083 1966,1210 1903,1172"],
  [CAP, "1903,953 1918,936 2002,986 1988,1002"],
  [SHADE, "1988,1002 2020,1021 1988,1060"],
  [TOP, "2002,986 2056,1017 1988,1095 1966,1082 2020,1021 1988,1002"],
  [SIDE, "1966,1082 1988,1095 1988,1315 1966,1302"],
  [SHADE, "1988,1095 2056,1017 2056,1238 1988,1315"],

  [SIDE, "1788,1322 1817,1288 1817,1343 1817,1347 1800,1347"],
  [SIDE, "1653,1271 1786,1347 1653,1347"],
  [TOP, "1653,1271 1669,1254 1765,1310 1796,1276 1817,1288 1788,1322 1818,1343 1812,1347 1786,1347"],
  [CAP, "1818,1343 1828,1347 1812,1347"],
];

const arrows =
  "M1017 299L1031 283M938 364L922 353M935 353L922 353L923 364" +
  "M1087 736L1130 686M1117 686L1130 686L1132 696M1013 794L998 783M1010 783L998 783L999 795" +
  "M830 964L849 976M847 965L849 976L834 977M754 1115L801 1059M787 1059L801 1059L805 1069" +
  "M653 1165L672 1177M671 1166L672 1177L658 1177M792 1346L828 1305M816 1304L828 1305L831 1314" +
  "M1256 1152L1289 1114M1277 1114L1289 1114L1290 1124M1761 297L1743 290M1754 285L1743 290L1750 302" +
  "M1513 556L1531 558M1522 549L1531 558L1521 562M1822 656L1859 616M1846 615L1859 616L1857 628" +
  "M1915 574L1931 581M1927 572L1931 581L1918 585M1936 959L1981 985M1976 972L1981 985L1968 986" +
  "M2001 1060L2021 1040M2008 1039L2021 1040L2022 1051M1806 1346L1757 1322M1776 1319L1757 1322L1763 1330" +
  "M1780 1309L1795 1298M1783 1297L1795 1298L1795 1307";

const bubbles = [
  [916, 300, "15"], [1204, 301, "14"], [645, 423, "16"], [644, 608, "15"], [644, 700, "14"], [644, 797, "K"],
  [645, 883, "L"], [645, 940, "13"], [645, 1076, "M"], [1001, 1329, "9"], [1076, 1329, "M"], [1326, 1329, ""],
  [1402, 1329, "L"], [1548, 1329, "K"], [1877, 1329, "4"], [2116, 1286, "J"], [2116, 1150, "3"], [2116, 1129, "H"],
  [2114, 1130, "1/3"], [2084, 300, "8"], [2116, 916, ""], [766, 1340, ""],
];

function octagon(x, y) {
  return Array.from({ length: 8 }, (_, i) => {
    const a = (i * Math.PI) / 4 + Math.PI / 2;
    return `${Math.round(x + 18 * Math.cos(a))},${Math.round(y + 18 * Math.sin(a))}`;
  }).join(" ");
}

const FloatBar = styled.div`
  position: absolute;
  top: 0;
  right: 0;
  display: flex;
  flex-direction: column;
  align-items: center;
  width: 49px;
  height: 369px;
  padding-top: 17px;
  border: 1px solid #d4d5d9;
  border-radius: 4px;
  background: #fff;
  button {
    display: flex;
    flex-direction: column;
    align-items: center;
    justify-content: space-between;
    height: 32px;
    margin-bottom: 11px;
  }
  button.drop {
    height: 45px;
    margin-bottom: 14px;
  }
  hr {
    width: 34px;
    margin: 0 0 8px;
    border: 0;
    border-top: 2px solid #555d6b;
  }
`;
const SideHandle = styled.button`
  position: absolute;
  top: 488px;
  ${(p) => (p.$right ? "right: 0;" : "left: 0;")}
  width: 24px;
  height: 93px;
  background: #4d4d4d;
  color: #aaa;
  clip-path: ${(p) =>
    p.$right ? "polygon(100% 0, 100% 100%, 0 91%, 0 8%)" : "polygon(0 0, 100% 8%, 100% 94%, 0 100%)"};
`;

function Scene() {
  return (
    <View>
      <svg viewBox="628 282 1507 1065" preserveAspectRatio="xMinYMin slice" role="img" aria-label="三维视图">
        <path d={gridLines} stroke="#e80000" strokeWidth="1.500" />
        {bubbles.map(([x, y, t], i) => (
          <g key={i}>
            <polygon points={octagon(x, y)} fill="none" stroke="#008a00" strokeWidth="1.500" />
            <text x={x} y={y + 9} fill="#fff" fontSize="24" textAnchor="middle">{t}</text>
          </g>
        ))}
        {solids.map(([fill, points], i) => (
          <polygon key={i} points={points} fill={fill} />
        ))}
        <text x="1326" y="1338" fill="#fff" fontSize="24" textAnchor="middle">1/6</text>
        {/* selected column */}
        <polygon points="1168,660 1204,619 1204,840 1168,881" fill="#0b389c" />
        <polygon points="1148,647 1186,604 1204,614 1204,619 1168,660" fill="#1458f5" />
        <path
          d="M1204 614L1186 604L1148 647L1168 660L1204 619M1148 647V867L1168 881V660M1186 604V824L1204 834M1186 824L1148 867M1168 881L1204 840"
          stroke="#f6fa00"
          strokeWidth="3"
          fill="none"
        />
        <path d={arrows} stroke="#000" strokeWidth="2.500" fill="none" />
        {/* axis tripod */}
        <g fontSize="22">
          <text x="685" y="1237" fill="#00d800">Y</text>
          <text x="697" y="1247" fill="#1b1bff">Z</text>
          <text x="748" y="1272" fill="#f00000">X</text>
          <path d="M709 1273l20-4" stroke="#f00000" strokeWidth="4" />
          <path d="M727 1261l18 5-17 9z" fill="#f00000" />
          <path d="M693 1237l5 10-6 9-3-4z" fill="#00d000" />
          <path d="M698 1250q5-6 10 0v12h-3v10h-4v-10h-3z" fill="#0000f5" />
          <path d="M697 1268h11v9l-10 3z" fill="#aaa" />
        </g>
      </svg>
      <SideHandle aria-label="收起左侧">&lt;</SideHandle>
      <SideHandle $right aria-label="收起右侧">&gt;</SideHandle>
      <FloatBar>
        <button aria-label="动态观察"><Icon name="orbit" size={34} weight={1.200} /></button>
        <button aria-label="二维"><Icon name="view2d" size={32} weight={1.200} /></button>
        <button className="drop" aria-label="线框"><Icon name="wire" size={32} weight={1.200} /><Caret $color={DARK} /></button>
        <button className="drop" aria-label="实体"><Icon name="solid" size={32} weight={1.200} /><Caret $color={DARK} /></button>
        <button aria-label="全屏"><Icon name="fit" size={32} weight={1.200} /></button>
        <button aria-label="局部三维"><Icon name="isolate" size={32} weight={1.200} /></button>
        <hr />
        <button aria-label="显示设置"><Icon name="listEye" size={32} weight={1.200} /></button>
      </FloatBar>
    </View>
  );
}

/* ---------- display settings ---------- */
const DisplayPanel = styled(Panel)`
  flex: none;
  width: 418px;
`;
const DisplayTabs = styled.div`
  flex: none;
  display: flex;
  align-items: flex-end;
  gap: 5px;
  height: 39px;
  padding-left: 3px;
  border-bottom: 1px solid #c9ccd4;
`;
const DisplayTab = styled.button`
  height: ${(p) => (p.$active ? 35 : 32)}px;
  margin-bottom: ${(p) => (p.$active ? -1 : 0)}px;
  padding: 0 ${(p) => (p.$active ? 7 : 10)}px;
  border: 1px solid ${(p) => (p.$active ? "#c9ccd4" : "#dcdcdc")};
  border-bottom: 0;
  border-radius: 5px 5px 0 0;
  background: ${(p) => (p.$active ? "#fff" : "#dcdcdc")};
  color: ${(p) => (p.$active ? BLUE : "#444")};
`;
const RadioRow = styled.div`
  flex: none;
  display: flex;
  align-items: center;
  gap: 33px;
  height: 44px;
  padding-left: 10px;
  label {
    display: flex;
    align-items: center;
    gap: 11px;
    color: #000;
    white-space: nowrap;
  }
  input {
    appearance: none;
    width: 20px;
    height: 20px;
    margin: 0;
    border: 1px solid #8a8a8a;
    border-radius: 50%;
  }
  input:checked {
    background: radial-gradient(circle, #1a78e6 0 4px, #fff 5px);
  }
`;
const FloorTree = styled.div`
  flex: 1;
  min-height: 0;
  display: flex;
  border: 1px solid #c9ccd4;
  overflow: hidden;
`;
const FloorRows = styled.div`
  padding: 4px 0 0 14px;
`;
const FloorRow = styled.label`
  display: flex;
  align-items: center;
  gap: 10px;
  height: 36px;
  padding-left: ${(p) => (p.$child ? 52 : 0)}px;
  color: ${(p) => (p.$off ? "#808080" : "#333")};
  ${Caret} {
    margin: 0 1px;
    border-width: 6px 5px 0;
  }
`;
const Check = styled.input.attrs({ type: "checkbox" })`
  flex: none;
  appearance: none;
  width: 21px;
  height: 21px;
  margin: 0;
  border: 1px solid #8f8f8f;
  border-radius: 3px;
  background: #fff;
  &:disabled {
    border-color: #b0b0b0;
    background: #efefef;
  }
  ${(p) => p.$partial && css`
    box-shadow: inset 0 0 0 2px #efefef, inset 0 0 0 3px #c0c0c0;
  `}
`;
const DisplayFoot = styled.label`
  flex: none;
  display: flex;
  align-items: center;
  gap: 5px;
  height: 57px;
  padding-left: 1px;
`;

const floors = ["构架层", "屋面层", ...Array.from({ length: 17 }, (_, i) => `第${26 - i}层`)];

function DisplaySettings() {
  return (
    <DisplayPanel>
      <PanelHead><Grip /><PanelTitle>显示设置</PanelTitle><Close /></PanelHead>
      <DisplayTabs><DisplayTab>图元显示</DisplayTab><DisplayTab $active>楼层显示</DisplayTab></DisplayTabs>
      <RadioRow>
        {["当前楼层", "相邻楼层", "全部楼层"].map((t, i) => (
          <label key={t}><input type="radio" name="scope" defaultChecked={i === 0} />{t}</label>
        ))}
      </RadioRow>
      <FloorTree>
        <FloorRows>
          <FloorRow><Caret /><Check />地下室</FloorRow>
          {["首层", "第-1层", "第-2层", "基础层"].map((t) => (
            <FloorRow key={t} $child><Check />{t}</FloorRow>
          ))}
          <FloorRow $off><Caret /><Check disabled $partial />1#楼</FloorRow>
          {floors.map((t) => (
            <FloorRow key={t} $child $off><Check disabled />{t}</FloorRow>
          ))}
        </FloorRows>
        <Scroll $h={181} $top={21} $right={6} />
      </FloorTree>
      <DisplayFoot><Check />其他区域图元亮显</DisplayFoot>
    </DisplayPanel>
  );
}

/* ---------- context menu ---------- */
const ContextMenu = styled.div`
  position: absolute;
  top: 0;
  left: 1204px;
  display: flex;
  flex-direction: column;
  width: 272px;
  height: 1101px;
  padding: 3px 3px 1px 1px;
  border: 1px solid #bdbdbd;
  background: #fdfdfd;
  hr {
    flex: none;
    width: 258px;
    margin: 6px 4px;
    border: 0;
    border-top: 1px solid #a9a9a9;
  }
`;
const MenuItem = styled.button`
  flex: 1;
  display: flex;
  align-items: center;
  gap: 12px;
  padding-left: 5px;
  white-space: pre;
  color: ${(p) => (p.disabled ? "#a0a0a0" : "#333")};
  background: ${(p) => p.$bg || "none"};
  background-clip: padding-box;
  border: solid transparent;
  border-width: 1px 0 2px;
`;

const menu = [
  [["repeat", "重复 点   Space"], ["cancel", "取消选择", "A"]],
  [["undo", "撤消", "U"], ["redo", "恢复", "R", true]],
  [["props", "属性", "P"]],
  [["trash", "删除", "D"], ["move", "移动", "V"], ["copy", "复制", "C"], ["mirror", "镜像", "M"], ["rotate", "旋转", "R"], ["align", "对齐", "N"], ["multiAlign", "多对齐", "B"]],
  [["annotate", "查改标注", "Z"], ["annotateAll", "批量查改标注"], ["gridCheck", "判断边角柱"], ["slant", "设置斜柱"]],
  [["sumSel", "汇总选中图元", "", true], ["gridFind", "查看工程量", "Q"], ["calc", "查看计算式", "E"], ["rebarFind", "查看钢筋量"]],
  [["sameName", "选择同名图元"], ["delSame", "删除同位置图元"], ["convert", "转换图元"], ["partSwap", "构件转换"], ["multiAlign", "修改归属"], ["direction", "调整方向", "", true]],
  [["showSel", "显示选中图元"], ["hideSel", "隐藏选中图元"], ["restoreSel", "恢复图元显示", "", true]],
];
const highlight = { 属性: "#c3daf2", 查看计算式: "#d8eaff" };

function PopupMenu() {
  return (
    <ContextMenu role="menu">
      {menu.map((group, i) => (
        <React.Fragment key={i}>
          {i > 0 && <hr />}
          {group.map(([icon, text, key, off]) => (
            <MenuItem key={text} role="menuitem" disabled={off} $bg={highlight[text]}>
              <Icon name={icon} size={24} tone={off ? "#b5b5b5" : undefined} />
              <span>{text}{key && <>(<u>{key}</u>)</>}</span>
            </MenuItem>
          ))}
        </React.Fragment>
      ))}
    </ContextMenu>
  );
}

/* ---------- pointer arrows drawn over the window ---------- */
const Overlay = styled.svg`
  position: absolute;
  inset: 0;
  width: 100%;
  height: 100%;
  pointer-events: none;
`;

const StatusBar = styled.footer`
  flex: none;
  display: flex;
  align-items: flex-end;
  gap: 11px;
  height: 6px;
  padding-left: 680px;
  background: #f7f7f8;
`;
const StatusChip = styled.span`
  width: ${(p) => p.$w}px;
  height: 2px;
  background: ${(p) => (p.$on ? "#3d86e0" : "#c3c3c3")};
`;

export default function App() {
  return (
    <Page>
      <GlobalStyle />
      <TopBar />
      <Menu />
      <Ribbon />
      <SelectorRow>
        {selectors.map(([label, value]) => (
          <Selector key={label}>
            <select aria-label={label}><option>{value}</option></select>
            <Caret $color="#555" />
          </Selector>
        ))}
      </SelectorRow>
      <Main>
        <Navigation />
        <LeftDock>
          <PartList />
          <Properties />
          <EditRow><button>截面编辑</button></EditRow>
        </LeftDock>
        <Scene />
        <DisplaySettings />
      </Main>
      <StatusBar>
        {[[32], [49, true], [34], [48], [49, true], [32], [32]].map(([w, on], i) => (
          <StatusChip key={i} $w={w} $on={on} />
        ))}
      </StatusBar>
      <PopupMenu />
      <Overlay viewBox="0 0 2560 1353" preserveAspectRatio="none" fill="#ee1c24">
        <polygon points="346,820 397,816 389,827 1348,1204 1347,1208 382,843 382,857" />
        <polygon points="1362,637 1412,639 1403,648 2045,987 2043,990 1394,665 1393,678" />
        <polygon points="2209,399 2245,436 2232,436 2460,1101 2457,1103 2213,442 2203,450" />
      </Overlay>
    </Page>
  );
}
